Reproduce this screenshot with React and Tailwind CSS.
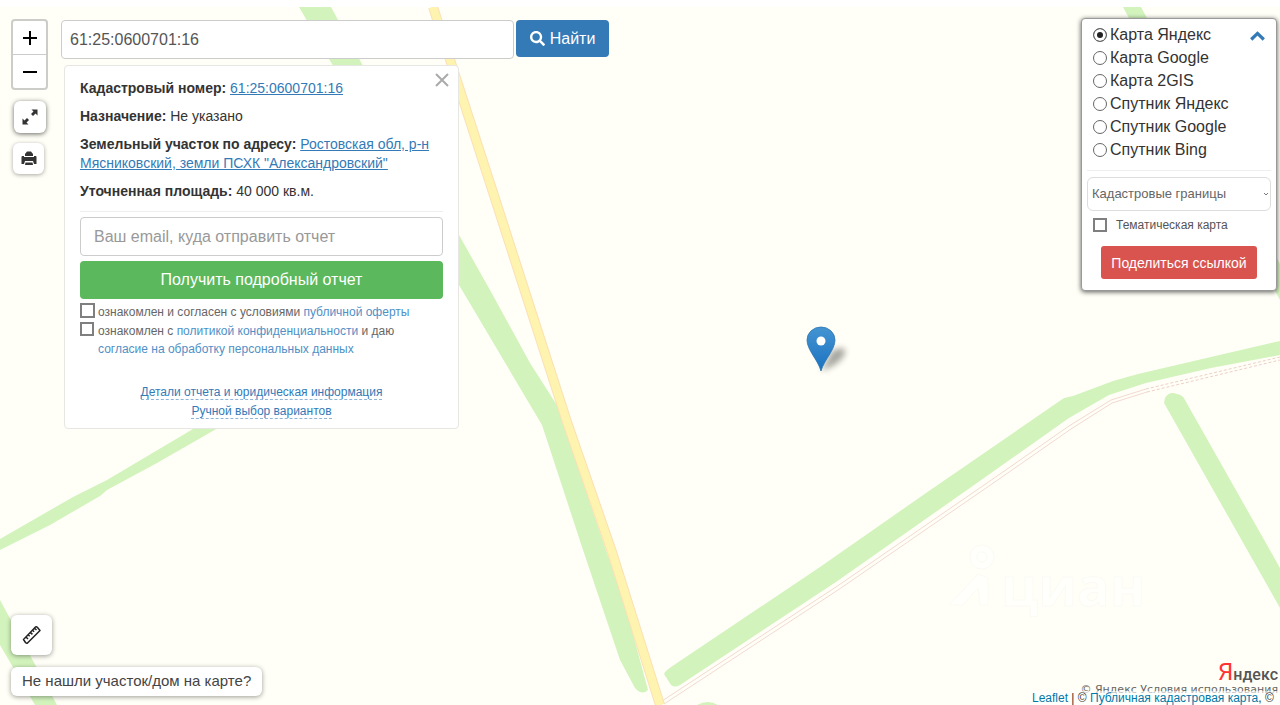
import { useState } from 'react';
import { FaSearch } from 'react-icons/fa';

const LAYERS = [
  { id: 'yandex-map', label: 'Карта Яндекс' },
  { id: 'google-map', label: 'Карта Google' },
  { id: '2gis-map', label: 'Карта 2GIS' },
  { id: 'yandex-sat', label: 'Спутник Яндекс' },
  { id: 'google-sat', label: 'Спутник Google' },
  { id: 'bing-sat', label: 'Спутник Bing' },
];

const checkboxClass =
  'shrink-0 appearance-none border-2 border-[#7f7f7f] bg-white checked:bg-[#337ab7]';

function MapCanvas() {
  return (
    <svg
      className="absolute inset-0 h-full w-full"
      viewBox="0 7 1280 698"
      preserveAspectRatio="xMinYMin slice"
      aria-hidden="true"
    >
      <defs>
        <linearGradient id="pin" x1="0" y1="0" x2="0" y2="1">
          <stop offset="0" stopColor="#4494d2" />
          <stop offset="1" stopColor="#1b72c0" />
        </linearGradient>
        <filter id="soft" x="-50%" y="-50%" width="200%" height="200%">
          <feGaussianBlur stdDeviation="3" />
        </filter>
      </defs>
      <rect y="7" width="1280" height="698" fill="#fffff7" />

      {/* tree belts */}
      <g fill="#d3f3bd">
        <path d="M299 7 H331 L362 64 L459 235 L490 290 L530 363 L560 410 L584 485 L607 553 L617 580 L630 623 L648 690 Q642 696 635 688 L620 660 L583 550 L542 425 L459 285 L332 64 Z" />
        <path d="M0 539 L73 497 L107 480 L193 429 L200 424 H226 L218 428 L157 463 L107 490 L100 496 L50 525 L0 550 Z" />
        <path d="M0 600 L57 705 H35 L0 645 Z" />
        <path d="M664 674 Q665 671 671 667 L738 622 L820 567 L926 493 L1064 398 L1073 396 L1113 381 L1138 374 L1280 341 V355 L1211 368 L1146 383 L1109 395 L1069 418 L967 490 L836 582 L680 685 Q675 688 671 685 Z" />
        <path d="M1165 398 Q1169 391 1177 394 Q1183 395 1185 400 L1280 568 V608 L1164 403 Z" />
        <path d="M1123 7 H1141 L1280 264 V300 Z" />
        <path d="M697 705 Q708 699 718 705 Z" />
      </g>

      {/* dirt track */}
      <g fill="none" stroke="#f2d9d2">
        <path d="M662 701 L836 587 L987 483 L1069 426 L1111 400 L1146 389" />
        <path d="M664 704 L838 590 L989 486 L1071 429 L1112 403 L1147 392" />
        <path d="M1146 389 L1280 357 M1147 392 L1280 360" strokeDasharray="3 2" stroke="#edcfc9" />
      </g>

      {/* main road */}
      <path d="M433 7 L489 180 L567 422 L612 552 L660 705" fill="none" stroke="#fbe0b4" strokeWidth="10" />
      <path d="M433 7 L489 180 L567 422 L612 552 L660 705" fill="none" stroke="#fff3b0" strokeWidth="8" />

      {/* faint logo on the tiles */}
      <g fill="#fffffb" stroke="#fcfaf4">
        <circle cx="982" cy="557" r="12" />
        <circle cx="982" cy="557" r="5" />
        <path d="M949 605 L978 574 L988 578 L988 605 L980 605 L978 588 L963 605 Z" />
        <text x="1001" y="606" fontSize="54" fontWeight="bold" fontFamily="Open Sans, sans-serif">циан</text>
      </g>

      {/* marker */}
      <path d="M821 371 L832 351 Q846 344 845 353 Q841 364 821 371 Z" fill="#000" opacity="0.35" filter="url(#soft)" />
      <path
        d="M821 371 C818 360 807 350 807 340 A14 13 0 0 1 835 340 C835 350 824 360 821 371 Z"
        fill="url(#pin)"
        stroke="#2b75b3"
        strokeWidth="0.8"
      />
      <circle cx="821" cy="341" r="4.5" fill="#fff" />
    </svg>
  );
}

function MapTools() {
  return (
    <div className="flex w-[37px] shrink-0 flex-col">
      <div className="flex w-full flex-col rounded border-2 border-[#ccccc8] bg-white">
        <button type="button" aria-label="Приблизить" className="flex h-[34px] items-center justify-center border-b border-[#ccc]">
          <svg width="14" height="14" viewBox="0 0 14 14" stroke="#000" strokeWidth="2" aria-hidden="true">
            <path d="M7 0 V14 M0 7 H14" />
          </svg>
        </button>
        <button type="button" aria-label="Отдалить" className="flex h-[33px] items-center justify-center">
          <svg width="14" height="14" viewBox="0 0 14 14" stroke="#000" strokeWidth="2" aria-hidden="true">
            <path d="M0 7 H14" />
          </svg>
        </button>
      </div>
      <button
        type="button"
        aria-label="Во весь экран"
        className="mt-[11px] ml-[3px] flex size-8 items-center justify-center rounded-md bg-white shadow-[0_1px_5px_rgba(0,0,0,0.6)]"
      >
        <svg width="16" height="16" viewBox="0 0 16 16" fill="#333" aria-hidden="true">
          <path d="M9.5 0.5 H15.5 V6.5 L13.5 4.5 L11 7 L9 5 L11.5 2.5 Z" />
          <path d="M0.5 9.5 L2.5 11.5 L5 9 L7 11 L4.5 13.5 L6.5 15.5 H0.5 Z" />
        </svg>
      </button>
      <button
        type="button"
        aria-label="Печать"
        className="mt-2.5 ml-0.5 flex size-[31px] items-center justify-center rounded-md bg-white shadow-[0_1px_4px_rgba(0,0,0,0.35)]"
      >
        <svg width="16" height="16" viewBox="0 0 16 16" fill="#333" aria-hidden="true">
          <path d="M4 5 V3 L6 0.5 H10 L12 3 V5 Z" />
          <path d="M0.5 6 Q0.5 5 1.5 5 H3 V6 H13 V5 H14.5 Q15.5 5 15.5 6 V13 H13 L12 10 H4 L3 13 H0.5 Z" />
          <path d="M4.5 11.5 H11.5 L12 14 H4 Z" />
        </svg>
      </button>
    </div>
  );
}

function ParcelCard() {
  const [email, setEmail] = useState('');

  return (
    <section className="relative mt-1.5 ml-[3px] w-[395px] rounded border border-[#e6e6e2] bg-white px-[15px] pt-[13px] pb-[9px] text-sm leading-[19px] text-[#333]">
      <button type="button" aria-label="Закрыть" className="absolute top-1.5 right-2 block p-px">
        <svg className="block" width="14" height="14" viewBox="0 0 14 14" stroke="#aaa" strokeWidth="2" aria-hidden="true">
          <path d="M1 1 L13 13 M13 1 L1 13" />
        </svg>
      </button>

      <div className="space-y-[9px]">
        <p>
          <b>Кадастровый номер:</b>{' '}
          <a href="#parcel" className="text-[#337ab7] underline">61:25:0600701:16</a>
        </p>
        <p><b>Назначение:</b> Не указано</p>
        <p>
          <b>Земельный участок по адресу:</b>{' '}
          <a href="#address" className="text-[#337ab7] underline">
            Ростовская обл, р-н Мясниковский, земли ПСХК "Александровский"
          </a>
        </p>
        <p><b>Уточненная площадь:</b> 40 000 кв.м.</p>
      </div>

      <hr className="mt-2.5 mb-[5px] border-[#eee]" />

      <form onSubmit={(e) => e.preventDefault()}>
        <input
          type="email"
          aria-label="Ваш email, куда отправить отчет"
          placeholder="Ваш email, куда отправить отчет"
          value={email}
          onChange={(e) => setEmail(e.target.value)}
          className="block h-[39px] w-full rounded border border-[#ccc] px-[13px] text-base text-[#555] placeholder:text-[#999]"
        />
        <button type="submit" className="mt-[5px] block h-[38px] w-full rounded bg-[#5cb85c] text-base text-white">
          Получить подробный отчет
        </button>
        <div className="mt-1 text-xs leading-[18px] text-[#666]">
          <div className="flex gap-[3px]">
            <input id="offer" type="checkbox" className={`${checkboxClass} size-[15px]`} />
            <label htmlFor="offer">
              ознакомлен и согласен с условиями <a href="#offer-text" className="text-[#4f90c6]">публичной оферты</a>
            </label>
          </div>
          <div className="mt-px flex gap-1">
            <input id="privacy" type="checkbox" className={`${checkboxClass} size-[14px]`} />
            <label htmlFor="privacy">
              ознакомлен с <a href="#privacy-text" className="text-[#4f90c6]">политикой конфиденциальности</a> и даю
              <br />
              <a href="#consent" className="text-[#4f90c6]">согласие на обработку персональных данных</a>
            </label>
          </div>
        </div>
      </form>

      <div className="mt-[27px] flex flex-col items-center gap-1 text-xs leading-[14px] text-[#337ab7]">
        <a href="#details" className="border-b border-dashed border-[#8fb5d6]">Детали отчета и юридическая информация</a>
        <a href="#manual" className="border-b border-dashed border-[#8fb5d6]">Ручной выбор вариантов</a>
      </div>
    </section>
  );
}

function LayersPanel() {
  const [layer, setLayer] = useState('yandex-map');

  return (
    <aside className="mt-[-1px] w-[196px] shrink-0 self-start rounded border border-[#999] bg-white px-[5px] pt-1 pb-[11px] shadow-[0_1px_5px_rgba(0,0,0,0.65)]">
      <div className="flex items-start justify-between">
        <fieldset className="pl-[6px] text-base leading-[23px] text-[#333]">
          {LAYERS.map(({ id, label }) => (
            <label key={id} className="flex items-center gap-[3px]">
              <input
                type="radio"
                name="layer"
                checked={layer === id}
                onChange={() => setLayer(id)}
                className="size-3.5 appearance-none rounded-full border border-[#666] bg-white checked:bg-[#222] checked:shadow-[inset_0_0_0_3px_#fff]"
              />
              {label}
            </label>
          ))}
        </fieldset>
        <button type="button" aria-label="Свернуть" className="mt-2 mr-1.5">
          <svg className="block" width="15" height="10" viewBox="0 0 15 10" fill="none" stroke="#337ab7" strokeWidth="3.2" aria-hidden="true">
            <path d="M1.2 8.5 L7.5 2.4 L13.8 8.5" />
          </svg>
        </button>
      </div>

      <hr className="mt-[9px] mb-1.5 border-[#eee]" />

      <div className="relative">
        <select
          aria-label="Слой карты"
          className="block h-[34px] w-full appearance-none rounded-md border border-[#ddd] bg-white px-1 text-[13px] text-[#666]"
        >
          <option>Кадастровые границы</option>
        </select>
        <svg className="pointer-events-none absolute top-[15px] right-0.5" width="6" height="5" viewBox="0 0 6 5" fill="none" stroke="#777" aria-hidden="true">
          <path d="M1 1 L3 3 L5 1" />
        </svg>
      </div>
      <label className="mt-[5px] flex items-center gap-[9px] pl-[6px] text-xs leading-[18px] text-[#555]">
        <input type="checkbox" className={`${checkboxClass} size-[14px]`} />
        Тематическая карта
      </label>
      <button type="button" className="mx-auto mt-3 block h-[33px] rounded-[3px] bg-[#d9534f] px-2.5 text-sm text-white">
        Поделиться ссылкой
      </button>
    </aside>
  );
}

function Attribution() {
  return (
    <div className="relative w-[250px] self-end whitespace-nowrap text-[#333]">
      <p className="pr-0.5 text-right font-['Roboto',sans-serif] text-base leading-4 font-medium text-[#555]">
        <span className="text-2xl leading-4 font-normal text-[#f33]">Я</span>ндекс
      </p>
      <p className="pr-0.5 pb-2 text-right font-['DejaVu_Sans',sans-serif] text-[11px] leading-[14px] text-[#666]">
        © Яндекс <a href="#terms">Условия использования</a>
      </p>
      <p className="absolute bottom-0 left-0 w-full bg-white/60 pl-0.5 text-xs leading-[14px]">
        <a href="#leaflet" className="text-[#0078a8]">Leaflet</a> | ©{' '}
        <a href="#pkk" className="text-[#0078a8]">Публичная кадастровая карта</a>, ©
      </p>
    </div>
  );
}

export default function App() {
  const [query, setQuery] = useState('61:25:0600701:16');

  return (
    <div className="bg-white pt-[7px] font-['Liberation_Sans',Arial,sans-serif]">
      <main className="relative flex min-h-[calc(100vh-7px)] flex-col justify-between overflow-hidden">
        <MapCanvas />

        <div className="relative flex items-start pt-3 pr-[3px] pl-[11px]">
          <MapTools />
          <div className="mt-px ml-[13px] w-[548px]">
            <form className="flex items-start gap-0.5" onSubmit={(e) => e.preventDefault()}>
              <input
                type="text"
                aria-label="Кадастровый номер"
                value={query}
                onChange={(e) => setQuery(e.target.value)}
                className="h-[39px] min-w-0 flex-1 rounded border border-[#ccc] bg-white px-2 text-base text-[#555]"
              />
              <button type="submit" className="flex h-[37px] w-[93px] items-center justify-center gap-[5px] rounded bg-[#337ab7] text-base text-white">
                <FaSearch className="size-[15px]" />
                Найти
              </button>
            </form>
            <ParcelCard />
          </div>
          <div className="flex-1" />
          <LayersPanel />
        </div>

        <div className="relative flex items-end justify-between pl-[11px]">
          <div className="flex flex-col items-start gap-3 pb-[9px]">
            <button
              type="button"
              aria-label="Измерить расстояние"
              className="flex h-10 w-[41px] items-center justify-center rounded-md bg-white shadow-[0_1px_5px_rgba(0,0,0,0.4)]"
            >
              <svg width="20" height="20" viewBox="0 0 20 20" fill="none" stroke="#222" strokeWidth="1.5" strokeLinejoin="round" aria-hidden="true">
                <path d="M1.5 14.5 L13.5 2 Q14.5 1.5 15.5 2.5 L18 5.5 L5.5 18 Q4.5 18.5 3.5 17.5 Z M4 12 L6 14 M6.2 9.7 L7.7 11.2 M8.4 7.4 L10.4 9.4 M10.6 5.2 L12.1 6.7 M12.6 3.2 L14.5 5" />
              </svg>
            </button>
            <button
              type="button"
              className="h-[29px] rounded-md bg-white px-[11px] text-[15px] text-[#444] shadow-[0_1px_5px_rgba(0,0,0,0.4)]"
            >
              Не нашли участок/дом на карте?
            </button>
          </div>
          <Attribution />
        </div>
      </main>
    </div>
  );
}
